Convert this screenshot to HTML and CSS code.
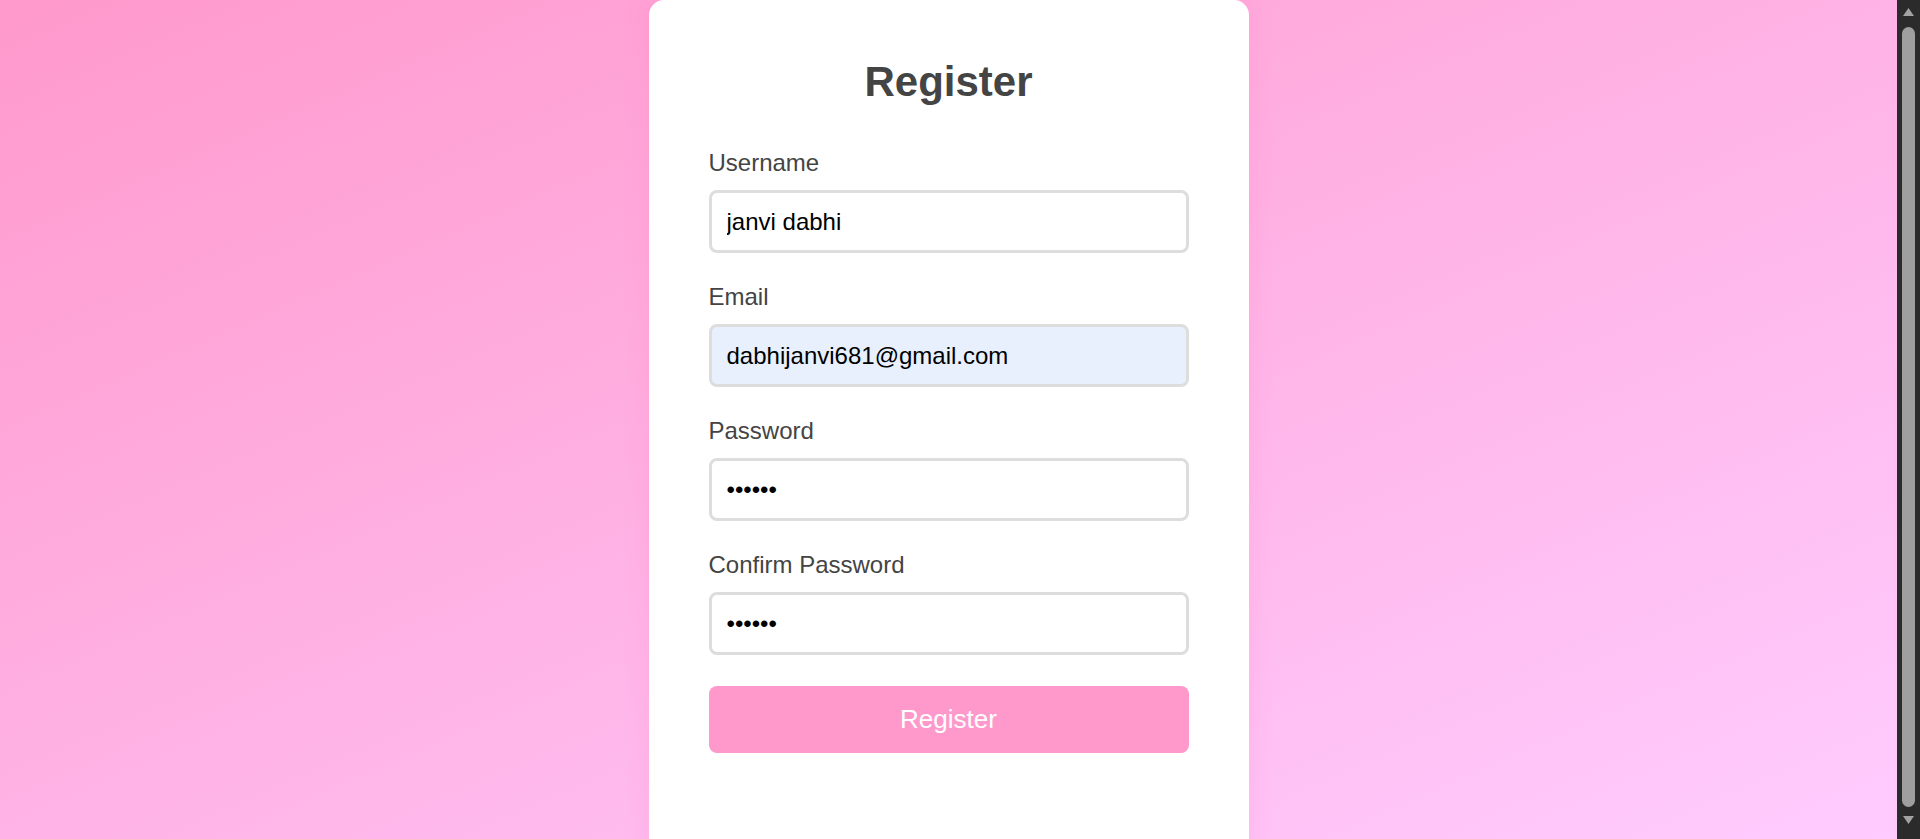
FILE: index.html
```html
<!DOCTYPE html>
<html lang="en">
<head>
<meta charset="utf-8">
<title>Register</title>
<link rel="stylesheet" href="styles.css">
</head>
<body>
  <main class="page">
    <div class="card">
      <h2 class="title">Register</h2>
      <form class="form">
        <div class="field">
          <label class="label" for="username">Username</label>
          <input class="input" id="username" type="text" value="janvi dabhi">
        </div>
        <div class="field">
          <label class="label" for="email">Email</label>
          <input class="input input-autofilled" id="email" type="email" value="dabhijanvi681@gmail.com">
        </div>
        <div class="field">
          <label class="label" for="password">Password</label>
          <input class="input" id="password" type="password" value="123456">
        </div>
        <div class="field">
          <label class="label" for="confirm">Confirm Password</label>
          <input class="input" id="confirm" type="password" value="123456" autofocus>
        </div>
        <button class="btn" type="button">Register</button>
      </form>
    </div>
  </main>
  <div class="scrollbar" aria-hidden="true">
    <svg class="sb-arrow sb-arrow-up" width="13" height="10" viewBox="0 0 13 10"><path d="M6.5 1 L12 9 L1 9 Z" fill="#a3a3a3"/></svg>
    <div class="sb-thumb"></div>
    <svg class="sb-arrow sb-arrow-down" width="13" height="10" viewBox="0 0 13 10"><path d="M1 1 L12 1 L6.5 9 Z" fill="#a3a3a3"/></svg>
  </div>
</body>
</html>
```

FILE: styles.css
```css
html, body {
  margin: 0;
  padding: 0;
}

body {
  font-family: "Liberation Sans", Arial, sans-serif;
  background: linear-gradient(to bottom right, #ff99cc, #ffccff);
  height: 100vh;
  overflow: hidden;
  display: flex;
}

.page {
  flex: 1;
  min-width: 0;
  height: 100vh;
  overflow: hidden;
  display: flex;
  justify-content: center;
  align-items: flex-start;
}

.card {
  flex: none;
  width: 600px;
  box-sizing: border-box;
  background: #ffffff;
  border-radius: 15px;
  padding: 58px 60px 102px;
  box-shadow: 0 0 24px rgba(255, 105, 180, 0.18);
}

.title {
  margin: 0 0 44px;
  text-align: center;
  font-size: 42px;
  line-height: 47px;
  font-weight: bold;
  color: #444444;
}

.form {
  display: flex;
  flex-direction: column;
  gap: 30px;
}

.field {
  display: flex;
  flex-direction: column;
}

.label {
  font-size: 24px;
  line-height: 28px;
  color: #444444;
  margin-bottom: 13px;
}

.input {
  box-sizing: border-box;
  width: 100%;
  height: 63px;
  padding: 0 15px;
  border: 3px solid #dddddd;
  border-radius: 8px;
  font-family: "Liberation Sans", Arial, sans-serif;
  font-size: 24px;
  color: #000000;
  background: #ffffff;
  outline: none;
}

.input:focus {
  outline: none;
  border-color: #dddddd;
}

.input-autofilled {
  background: #e8f0fe;
}

.btn {
  margin-top: 1px;
  height: 67px;
  border: none;
  border-radius: 8px;
  background: #ff99cc;
  color: #ffffff;
  font-family: "Liberation Sans", Arial, sans-serif;
  font-size: 26px;
  cursor: pointer;
}

.scrollbar {
  flex: none;
  width: 23px;
  height: 100vh;
  box-sizing: border-box;
  background: #2b2b2b;
  display: flex;
  flex-direction: column;
  align-items: center;
  padding: 7px 0 14px;
}

.sb-arrow {
  flex: none;
  display: block;
}

.sb-arrow-up {
  margin-bottom: 10px;
}

.sb-thumb {
  flex: 1;
  width: 13px;
  background: #9f9f9f;
  border-radius: 7px;
}

.sb-arrow-down {
  margin-top: 8px;
}
```
